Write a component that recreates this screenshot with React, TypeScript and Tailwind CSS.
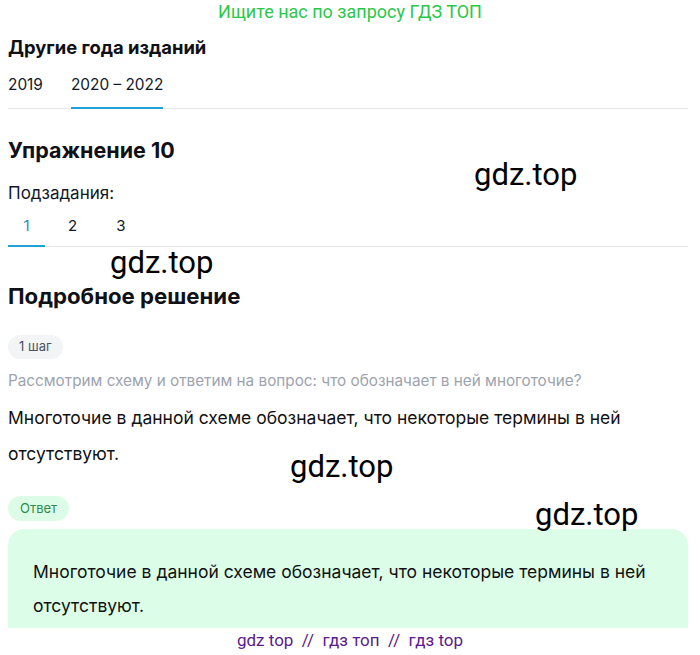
import React from "react";

const Watermark = ({ className }: { className: string }) => (
  <div
    className={`pointer-events-none absolute font-[family-name:Roboto,sans-serif] text-[31px] leading-none text-black ${className}`}
  >
    gdz.top
  </div>
);

export default function App() {
  return (
    <div className="relative flex h-[655px] w-[700px] flex-col overflow-hidden bg-white font-[family-name:Inter,sans-serif] text-[#111111]">
      <div className="h-[24px] text-center font-[family-name:Roboto,sans-serif] text-[18px] leading-[24px] text-[#2ac84a]">
        Ищите нас по запросу ГДЗ ТОП
      </div>

      <div className="flex flex-col items-start pl-2 pr-3">
        <h2 className="mt-[10px] text-[18.4px] font-bold leading-[26px] text-[#0f1115]">Другие года изданий</h2>

        <div className="mt-[14px] flex self-stretch gap-[28px] border-b border-[#e5e7eb] text-[15.4px] text-[#111827]">
          <div className="border-b-2 border-transparent pb-[10px] leading-[22px]">2019</div>
          <div className="-mb-px border-b-2 border-[#1fa3d6] pb-[10px] leading-[22px]">2020 – 2022</div>
        </div>

        <h1 className="mt-[27px] text-[21.5px] font-bold leading-[28px] text-[#0f1115]">Упражнение 10</h1>
        <div className="mt-[18px] text-[17px] leading-[22px] text-[#111827]">Подзадания:</div>

        <div className="mt-[12px] flex self-stretch border-b border-[#e5e7eb] text-[15px] leading-[20px]">
          <div className="-mb-px w-[37px] border-b-2 border-[#1fa3d6] pb-[9px] text-center text-[#1f8fc0]">1</div>
          <div className="w-[55px] pb-[9px] text-center text-[#111827]">2</div>
          <div className="w-[42px] pb-[9px] text-center text-[#111827]">3</div>
        </div>

        <h2 className="mt-[35px] text-[22.2px] font-bold leading-[28px] text-[#0f1115]">Подробное решение</h2>

        <span className="mt-[25px] flex h-[24px] items-center rounded-full bg-[#f3f4f6] px-[11px] text-[13px] text-[#4b5563]">
          1 шаг
        </span>
        <p className="mt-[11px] text-[15.3px] leading-[22px] text-[#9ca3af]">
          Рассмотрим схему и ответим на вопрос: что обозначает в ней многоточие?
        </p>
        <p className="mt-[8px] text-[17.5px] leading-[36px] text-[#111111]">
          Многоточие в данной схеме обозначает, что некоторые термины в ней отсутствуют.
        </p>

        <span className="mt-[24px] flex h-[25px] items-center rounded-full bg-[#dcfce7] px-[12px] text-[13px] text-[#2f8a4c]">
          Ответ
        </span>
        <div className="mt-[8px] self-stretch rounded-t-[16px] bg-[#dcfde8] pb-[5px] pl-[25px] pr-[12px] pt-[26px] text-[17.5px] leading-[34px] text-[#111111]">
          Многоточие в данной схеме обозначает, что некоторые термины в ней отсутствуют.
        </div>
      </div>

      <div className="h-[24px] bg-white text-center font-[family-name:Roboto,sans-serif] text-[17px] leading-[24px] text-[#5a1b8c]">
        gdz top &nbsp;//&nbsp; гдз топ &nbsp;//&nbsp; гдз top
      </div>

      <Watermark className="left-[474px] top-[159px]" />
      <Watermark className="left-[110px] top-[247px]" />
      <Watermark className="left-[290px] top-[451px]" />
      <Watermark className="left-[535px] top-[499px]" />
    </div>
  );
}
